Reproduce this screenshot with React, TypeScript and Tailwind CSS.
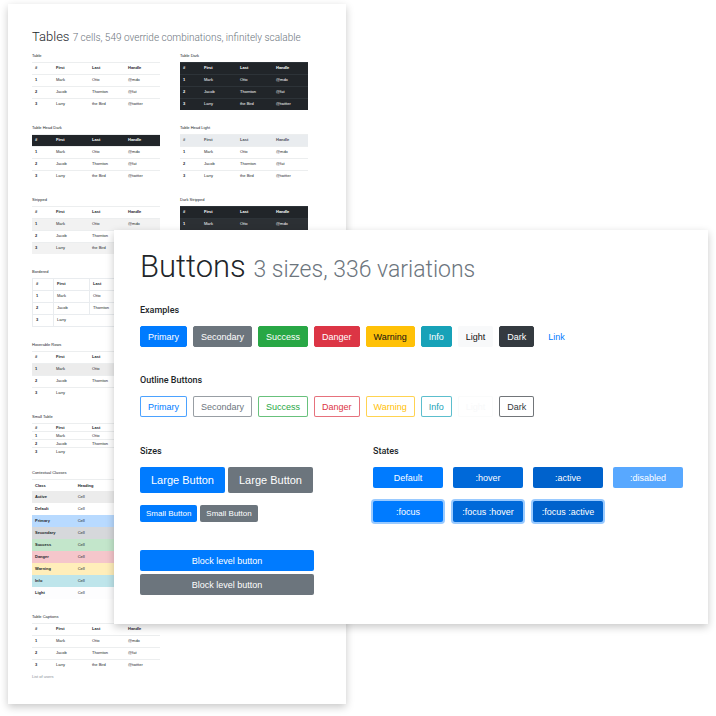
import type { ReactNode } from "react";
import clsx from "clsx";

type TableStyle = {
  table?: string;
  head?: string;
  cell?: string;
  rows?: string[];
};

const people = [
  ["1", "Mark", "Otto", "@mdo"],
  ["2", "Jacob", "Thornton", "@fat"],
  ["3", "Larry", "the Bird", "@twitter"],
];

function Block({ title, children }: { title: string; children: ReactNode }) {
  return (
    <section>
      <h2 className="h-3 text-[4px] leading-[11px] text-[#212529]">{title}</h2>
      {children}
    </section>
  );
}

function PeopleTable({
  look = {},
  small = false,
  merged = false,
  count = 3,
  caption,
}: {
  look?: TableStyle;
  small?: boolean;
  merged?: boolean;
  count?: number;
  caption?: string;
}) {
  const cell = clsx(
    "px-[3px] pt-0 text-left",
    small ? "h-2 pb-0" : "h-3 pb-[2px]",
    look.cell ?? "border-t border-[#eceeef]",
  );
  return (
    <table
      className={clsx(
        "w-full table-fixed border-separate border-spacing-0 text-[4px] leading-[6px]",
        look.table ?? "text-[#212529]",
      )}
    >
      {caption && <caption className="caption-bottom text-left leading-[12px] text-[#868e96]">{caption}</caption>}
      <colgroup>
        <col className="w-[21px]" />
        <col className="w-9" />
        <col className="w-9" />
        <col />
      </colgroup>
      <thead className={look.head}>
        <tr>
          {["#", "First", "Last", "Handle"].map((name) => (
            <th key={name} scope="col" className={clsx(cell, "font-bold")}>
              {name}
            </th>
          ))}
        </tr>
      </thead>
      <tbody>
        {people.slice(0, count).map(([id, first, last, handle], i) => (
          <tr key={id} className={look.rows?.[i]}>
            <th scope="row" className={clsx(cell, "font-bold")}>
              {id}
            </th>
            {merged && i === 2 ? (
              <td colSpan={2} className={cell}>
                {first}
              </td>
            ) : (
              <>
                <td className={cell}>{first}</td>
                <td className={cell}>{last}</td>
              </>
            )}
            <td className={cell}>{handle}</td>
          </tr>
        ))}
      </tbody>
    </table>
  );
}

const contexts = [
  ["Active", "bg-[#ececec]"],
  ["Default", "bg-white"],
  ["Primary", "bg-[#b8daff]"],
  ["Secondary", "bg-[#d6d8db]"],
  ["Success", "bg-[#c3e6cb]"],
  ["Danger", "bg-[#f5c6cb]"],
  ["Warning", "bg-[#ffeeba]"],
  ["Info", "bg-[#bee5eb]"],
  ["Light", "bg-[#fdfdfe]"],
];

function ContextTable() {
  return (
    <table className="w-full table-fixed border-separate border-spacing-0 text-[4px] leading-[6px] text-[#212529]">
      <thead>
        <tr>
          {["Class", "Heading", "Heading"].map((name, i) => (
            <th key={i} scope="col" className="h-3 border-t border-[#eceeef] px-[3px] py-0 text-left font-bold">
              {name}
            </th>
          ))}
        </tr>
      </thead>
      <tbody>
        {contexts.map(([name, color]) => (
          <tr key={name} className={color}>
            <th scope="row" className="h-3 px-[3px] py-0 text-left font-bold">
              {name}
            </th>
            <td className="h-3 px-[3px] py-0">Cell</td>
            <td className="h-3 px-[3px] py-0">Cell</td>
          </tr>
        ))}
      </tbody>
    </table>
  );
}

function TablesCard() {
  return (
    <article className="w-[calc(50%-12px)] bg-white pt-[22px] pr-[38px] pb-[21px] pl-6 shadow-[0_3px_8px_rgba(0,0,0,0.22)]">
      <h1 className="mb-[2px] font-['Roboto',sans-serif] text-[13px] leading-[21px] font-light whitespace-nowrap text-[#212529]">
        Tables <small className="text-[10px] text-[#6c757d]">7 cells, 549 override combinations, infinitely scalable</small>
      </h1>
      <div className="grid grid-cols-2 gap-5">
        <div className="flex flex-col gap-3">
          <Block title="Table">
            <PeopleTable />
          </Block>
          <Block title="Table Head Dark">
            <PeopleTable look={{ head: "bg-[#212529] text-white" }} />
          </Block>
          <Block title="Stripped">
            <PeopleTable look={{ rows: ["bg-[#f2f2f2]", "", "bg-[#f2f2f2]"] }} />
          </Block>
          <Block title="Bordered">
            <PeopleTable
              merged
              look={{
                table: "border-r border-b border-[#e9ecef] text-[#212529]",
                cell: "border-t border-l border-[#e9ecef]",
              }}
            />
          </Block>
          <Block title="Hoverable Rows">
            <PeopleTable merged look={{ rows: ["bg-[#ececec]"] }} />
          </Block>
          <Block title="Small Table">
            <PeopleTable small merged />
          </Block>
          <Block title="Contextual Classes">
            <ContextTable />
          </Block>
          <Block title="Table Captions">
            <PeopleTable caption="List of users" />
          </Block>
        </div>
        <div className="flex flex-col gap-3">
          <Block title="Table Dark">
            <PeopleTable look={{ table: "bg-[#212529] text-white", cell: "border-t border-[#2d3338]" }} />
          </Block>
          <Block title="Table Head Light">
            <PeopleTable look={{ head: "bg-[#e9ecef] text-[#495057]" }} />
          </Block>
          <Block title="Dark Stripped">
            <PeopleTable
              count={1}
              look={{
                table: "bg-[#212529] text-white",
                cell: "border-t border-[#2d3338]",
                rows: ["bg-[#2c3034]"],
              }}
            />
          </Block>
        </div>
      </div>
    </article>
  );
}

const solid = [
  ["Primary", "border-[#007bff] bg-[#007bff] text-white"],
  ["Secondary", "border-[#6c757d] bg-[#6c757d] text-white"],
  ["Success", "border-[#28a745] bg-[#28a745] text-white"],
  ["Danger", "border-[#dc3545] bg-[#dc3545] text-white"],
  ["Warning", "border-[#ffc107] bg-[#ffc107] text-[#111111]"],
  ["Info", "border-[#17a2b8] bg-[#17a2b8] text-white"],
  ["Light", "border-[#f8f9fa] bg-[#f8f9fa] text-[#111111]"],
  ["Dark", "border-[#343a40] bg-[#343a40] text-white"],
];

const outline = [
  ["Primary", "border-[#007bff]/70 text-[#007bff]"],
  ["Secondary", "border-[#6c757d]/70 text-[#6c757d]"],
  ["Success", "border-[#28a745]/70 text-[#28a745]"],
  ["Danger", "border-[#dc3545]/70 text-[#dc3545]"],
  ["Warning", "border-[#ffc107]/70 text-[#ffc107]"],
  ["Info", "border-[#17a2b8]/70 text-[#17a2b8]"],
  ["Light", "border-[#f8f9fa]/70 text-[#f8f9fa]"],
  ["Dark", "border-[#343a40]/70 text-[#343a40]"],
];

const states = [
  ["Default", "bg-[#007bff]"],
  [":hover", "bg-[#0069d9]"],
  [":active", "bg-[#0062cc]"],
  [":disabled", "bg-[#007bff] opacity-65"],
  [":focus", "bg-[#007bff] shadow-[0_0_0_2px_rgba(0,123,255,0.4)]"],
  [":focus :hover", "bg-[#0069d9] shadow-[0_0_0_2px_rgba(0,123,255,0.4)]"],
  [":focus :active", "bg-[#0062cc] shadow-[0_0_0_2px_rgba(0,123,255,0.4)]"],
];

function SectionTitle({ children }: { children: ReactNode }) {
  return (
    <h2 className="mb-[9px] font-['Roboto',sans-serif] text-[9px] leading-[14px] font-medium text-[#212529]">
      {children}
    </h2>
  );
}

const base = "h-[21px] rounded-[2px] pt-px text-[9px] leading-[18px] subpixel-antialiased";

function ButtonsCard() {
  return (
    <article className="absolute top-[230px] right-2 left-[114px] bg-white pt-[17px] pr-[25px] pb-[29px] pl-[26px] shadow-[0_3px_8px_rgba(0,0,0,0.22)]">
      <h1 className="font-['Roboto',sans-serif] text-[31px] leading-[40px] font-light whitespace-nowrap text-[#212529]">
        Buttons <small className="text-[23px] text-[#6c757d]">3 sizes, 336 variations</small>
      </h1>
      <section className="mt-[13px]">
        <SectionTitle>Examples</SectionTitle>
        <div className="flex gap-1.5">
          {solid.map(([name, color]) => (
            <button key={name} type="button" className={clsx(base, "border px-[7px]", color)}>
              {name}
            </button>
          ))}
          <a href="#link" className={clsx(base, "border border-transparent px-[7px] text-[#007bff]")}>
            Link
          </a>
        </div>
      </section>
      <section className="mt-[26px]">
        <SectionTitle>Outline Buttons</SectionTitle>
        <div className="flex gap-1.5">
          {outline.map(([name, color]) => (
            <button key={name} type="button" className={clsx(base, "border bg-white px-[7px]", color)}>
              {name}
            </button>
          ))}
        </div>
      </section>
      <div className="mt-[27px] grid grid-cols-[174px_1fr] gap-x-[59px]">
        <section>
          <SectionTitle>Sizes</SectionTitle>
          <div className="flex gap-[3px] text-[11px] text-white">
            <button type="button" className="h-[26px] rounded-[2px] bg-[#007bff] px-[11px]">
              Large Button
            </button>
            <button type="button" className="h-[26px] rounded-[2px] bg-[#6c757d] px-[11px]">
              Large Button
            </button>
          </div>
          <div className="mt-3 flex gap-[3px] text-[8px] text-white">
            <button type="button" className="h-[17px] rounded-[2px] bg-[#007bff] px-1.5">
              Small Button
            </button>
            <button type="button" className="h-[17px] rounded-[2px] bg-[#6c757d] px-1.5">
              Small Button
            </button>
          </div>
          <div className="mt-7 flex flex-col gap-[3px] text-white">
            <button type="button" className={clsx(base, "bg-[#007bff]")}>
              Block level button
            </button>
            <button type="button" className={clsx(base, "bg-[#6c757d]")}>
              Block level button
            </button>
          </div>
        </section>
        <section>
          <SectionTitle>States</SectionTitle>
          <div className="grid grid-cols-4 gap-x-[10px] gap-y-[13px] text-white">
            {states.map(([name, color]) => (
              <button key={name} type="button" disabled={name === ":disabled"} className={clsx(base, color)}>
                {name}
              </button>
            ))}
          </div>
        </section>
      </div>
    </article>
  );
}

export default function App() {
  return (
    <main className="relative bg-white px-2 pt-1 pb-3 font-['Liberation_Sans',Arial,sans-serif]">
      <TablesCard />
      <ButtonsCard />
    </main>
  );
}
